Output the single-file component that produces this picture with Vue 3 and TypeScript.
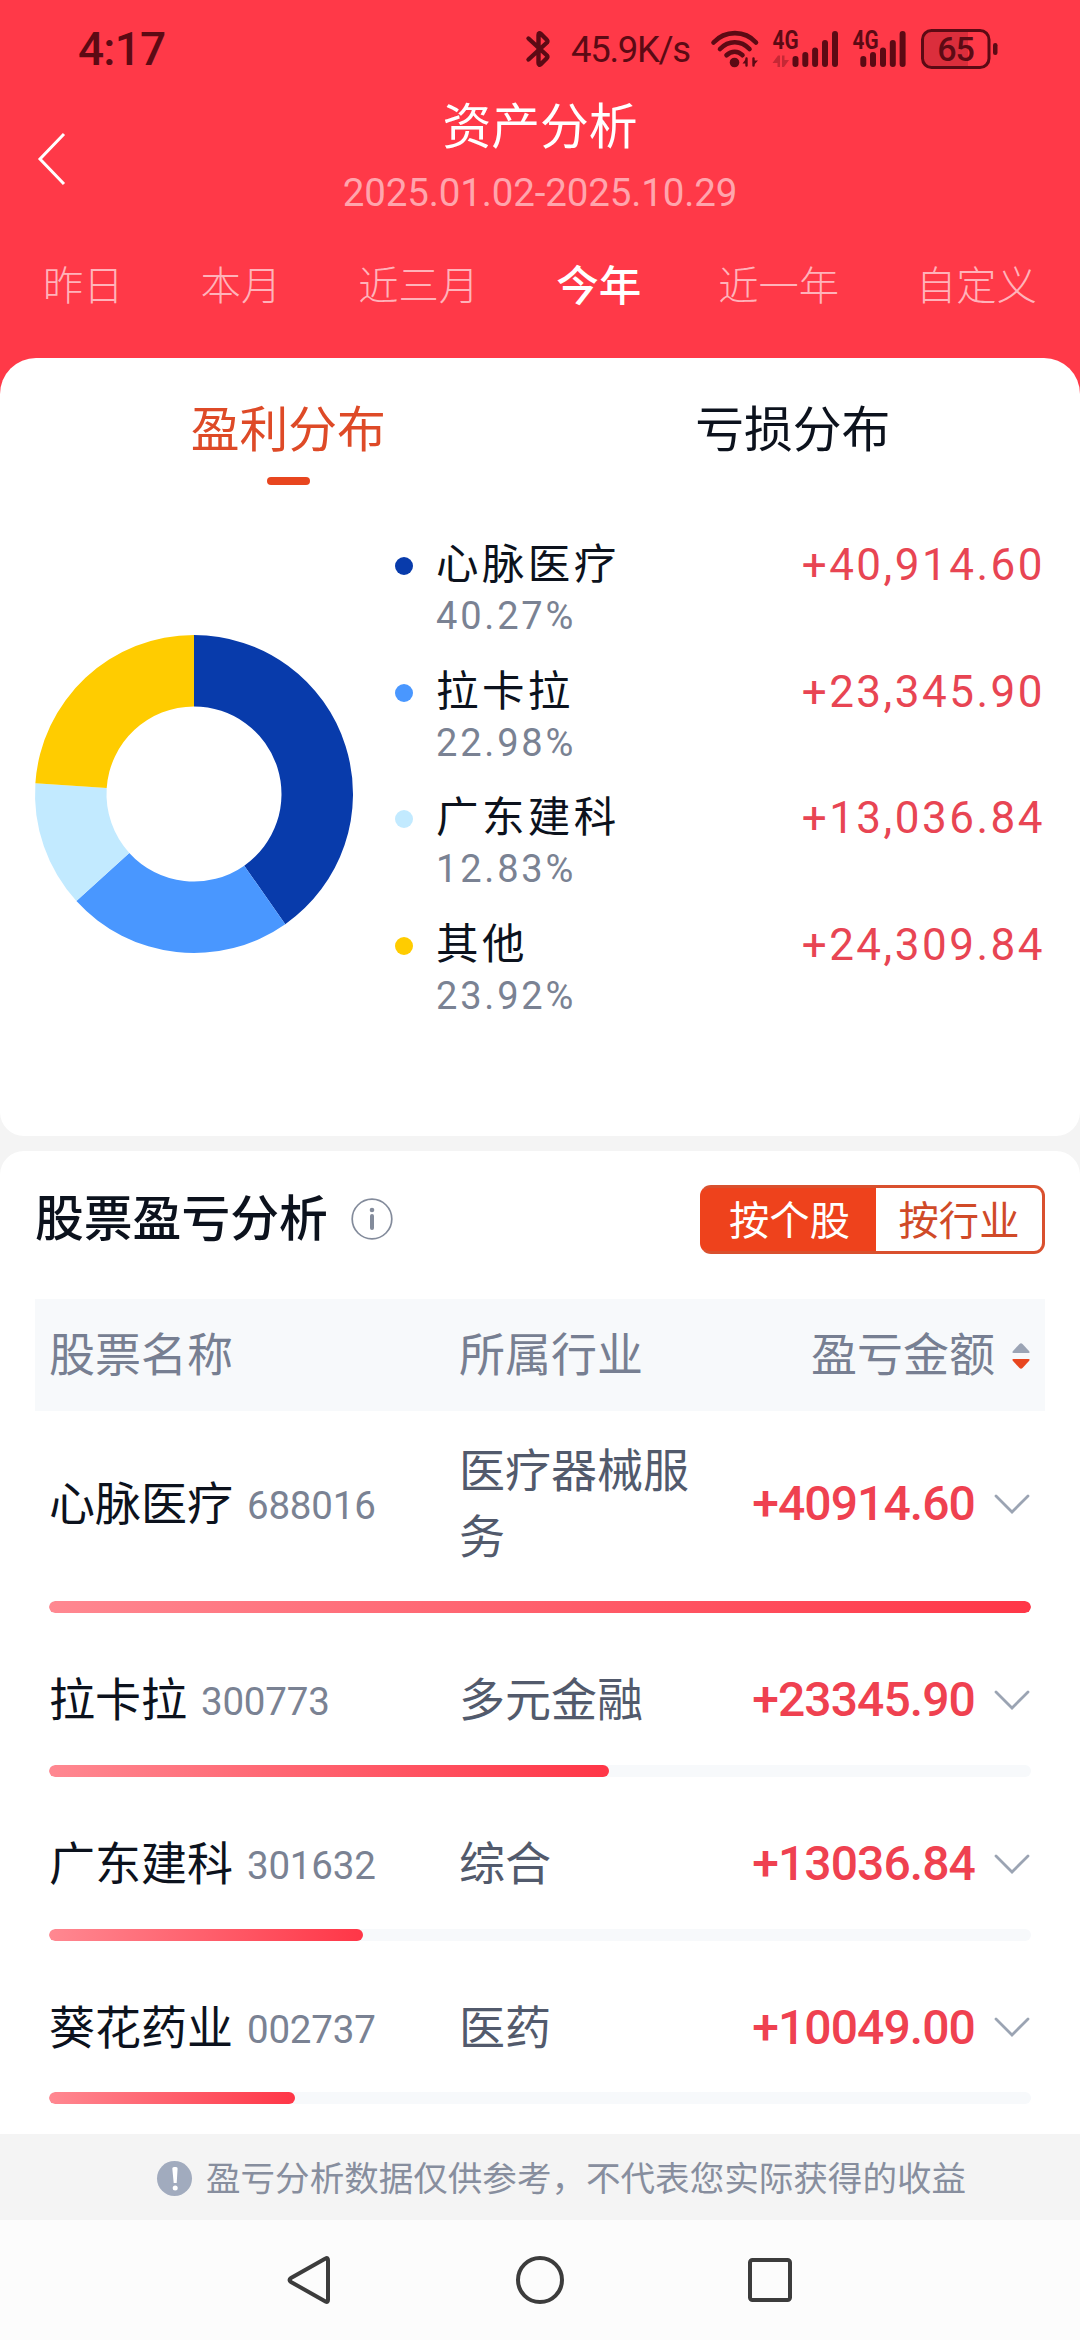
<script setup lang="ts">
import { computed, ref } from 'vue'

interface Slice {
  name: string
  percent: number
  amount: string
  color: string
}

interface Stock {
  name: string
  code: string
  industry: string
  profit: number
}

const ranges = ['昨日', '本月', '近三月', '今年', '近一年', '自定义']
const activeRange = ref('今年')

const slices: Slice[] = [
  { name: '心脉医疗', percent: 40.27, amount: '+40,914.60', color: '#083bab' },
  { name: '拉卡拉', percent: 22.98, amount: '+23,345.90', color: '#4997ff' },
  { name: '广东建科', percent: 12.83, amount: '+13,036.84', color: '#c2eaff' },
  { name: '其他', percent: 23.92, amount: '+24,309.84', color: '#ffcc00' },
]

const stocks: Stock[] = [
  { name: '心脉医疗', code: '688016', industry: '医疗器械服务', profit: 40914.6 },
  { name: '拉卡拉', code: '300773', industry: '多元金融', profit: 23345.9 },
  { name: '广东建科', code: '301632', industry: '综合', profit: 13036.84 },
  { name: '葵花药业', code: '002737', industry: '医药', profit: 10049 },
]

const maxProfit = Math.max(...stocks.map((s) => s.profit))
const barWidth = (s: Stock) => `${Math.round((s.profit / maxProfit) * 100)}%`

const OUTER = 159
const INNER = 87.5

function point(radius: number, fraction: number): string {
  const a = fraction * Math.PI * 2
  return `${(OUTER + radius * Math.sin(a)).toFixed(2)} ${(OUTER - radius * Math.cos(a)).toFixed(2)}`
}

const arcs = computed(() => {
  let start = 0
  return slices.map((s) => {
    const end = start + s.percent / 100
    const large = end - start > 0.5 ? 1 : 0
    const d = `M${point(OUTER, start)} A${OUTER} ${OUTER} 0 ${large} 1 ${point(OUTER, end)} L${point(INNER, end)} A${INNER} ${INNER} 0 ${large} 0 ${point(INNER, start)}Z`
    start = end
    return { d, color: s.color }
  })
})
</script>

<template>
  <div class="screen">
    <header class="hero">
      <div class="status">
        <span class="clock">4:17</span>
        <div class="status-right">
          <svg class="bt" width="24" height="38" viewBox="0 0 24 38" fill="none" stroke="#5c0a14" stroke-width="4.4" stroke-linecap="round" stroke-linejoin="round">
            <path d="M2.5 8.500L21 25.500Q22 27 20.500 28.500L15 34Q12.500 36 12.500 33V5Q12.500 2 15 4L20.500 9.500Q22 11 21 12.500L2.500 29.500" />
          </svg>
          <span class="speed">45.9K/s</span>
          <svg class="wifi" width="48" height="38" viewBox="0 0 48 38" fill="none" stroke="#5c0a14" stroke-width="4.600" stroke-linecap="round">
            <path d="M2.500 12.500C14 0 34 0 45 12.500M9 19C17.500 10 30 10 38.500 19M15.500 25.200C20.500 20.500 27 20.500 31.500 25.200" />
            <circle cx="23.500" cy="32.500" r="4.800" fill="#5c0a14" stroke="none" />
            <path d="M35.500 28.500V35.500M42.500 28.500V35.500" stroke-width="2.400" />
            <path d="M36 27.500V33.500H31.500ZM42 36V30.500H47Z" fill="#5c0a14" stroke="none" />
          </svg>
          <svg class="sig" width="68" height="38" viewBox="0 0 68 38" fill="#5c0a14">
            <text x="0.500" y="19" textLength="26" lengthAdjust="spacingAndGlyphs" class="net">4G</text>
            <g opacity="0.35">
              <path d="M6 25.500H8V37H5.500V33H0.500ZM10 25.500H12.500V30H17L12 37H10Z" />
            </g>
            <rect x="20.500" y="26" width="6" height="11" rx="3" />
            <rect x="30.300" y="22" width="6" height="15" rx="3" />
            <rect x="40.100" y="17.500" width="6" height="19.500" rx="3" />
            <rect x="50" y="10" width="6" height="27" rx="3" />
            <rect x="60" y="1" width="6" height="36" rx="3" />
          </svg>
          <svg class="sig" width="56" height="38" viewBox="0 0 56 38" fill="#5c0a14">
            <text x="0.500" y="19" textLength="26" lengthAdjust="spacingAndGlyphs" class="net">4G</text>
            <rect x="8.300" y="26" width="6" height="11" rx="3" />
            <rect x="18" y="22" width="6" height="15" rx="3" />
            <rect x="28" y="17.500" width="6" height="19.500" rx="3" />
            <rect x="37.800" y="10" width="6" height="27" rx="3" />
            <rect x="47.600" y="1" width="6" height="36" rx="3" />
          </svg>
          <svg class="bat" width="80" height="42" viewBox="0 0 80 42">
            <path d="M10 3H48V38H10Q3 38 3 31V10Q3 3 10 3Z" fill="#5c0a14" opacity="0.22" />
            <rect x="2.500" y="2.500" width="66.500" height="37" rx="9" fill="none" stroke="#5c0a14" stroke-width="3" />
            <rect x="73" y="15" width="4.500" height="12" rx="2.200" fill="#5c0a14" />
            <text x="35.500" y="33" text-anchor="middle" class="bat-text">65</text>
          </svg>
        </div>
      </div>
      <div class="titlebar">
        <svg class="back" width="30" height="54" viewBox="0 0 30 54" fill="none" stroke="#fff" stroke-width="3">
          <path d="M27 2L3 27L27 52" />
        </svg>
        <div class="titles">
          <div class="title">资产分析</div>
          <div class="period">2025.01.02-2025.10.29</div>
        </div>
      </div>
      <nav class="ranges">
        <span v-for="r in ranges" :key="r" class="range" :class="{ on: r === activeRange }" @click="activeRange = r">{{ r }}</span>
      </nav>
    </header>

    <section class="card dist">
      <div class="tabs">
        <div class="tab on">盈利分布</div>
        <div class="tab">亏损分布</div>
      </div>
      <div class="dist-body">
        <svg class="donut" width="318" height="318" viewBox="0 0 318 318">
          <path v-for="a in arcs" :key="a.color" :d="a.d" :fill="a.color" />
        </svg>
        <ul class="legend">
          <li v-for="s in slices" :key="s.name" class="item">
            <i class="dot" :style="{ background: s.color }"></i>
            <div class="item-main">
              <div class="item-top">
                <span class="item-name">{{ s.name }}</span>
                <span class="item-amount">{{ s.amount }}</span>
              </div>
              <div class="item-pct">{{ s.percent.toFixed(2) }}%</div>
            </div>
          </li>
        </ul>
      </div>
    </section>

    <section class="card analysis">
      <div class="head">
        <h2 class="head-title">股票盈亏分析</h2>
        <svg class="info" width="42" height="42" viewBox="0 0 42 42">
          <circle cx="21" cy="21" r="19.800" fill="none" stroke="#838b9b" stroke-width="1.700" />
          <circle cx="21" cy="12" r="2.300" fill="#838b9b" />
          <path d="M21 18V30" stroke="#838b9b" stroke-width="4" stroke-linecap="round" />
        </svg>
        <div class="switch">
          <span class="opt on">按个股</span>
          <span class="opt">按行业</span>
        </div>
      </div>
      <div class="thead">
        <span class="c1">股票名称</span>
        <span class="c2">所属行业</span>
        <span class="c3">
          <span>盈亏金额</span>
          <svg class="sort" width="18" height="28" viewBox="0 0 18 28">
            <path d="M1.500 11Q-.5 11 1 9L7.500 2Q9 .5 10.500 2L17 9Q18.500 11 16.500 11Z" fill="#9ba4b5" />
            <path d="M1.500 17Q-.5 17 1 19L7.500 26Q9 27.500 10.500 26L17 19Q18.500 17 16.500 17Z" fill="#e8461f" />
          </svg>
        </span>
      </div>
      <div v-for="s in stocks" :key="s.code" class="row">
        <div class="cells">
          <div class="c1 stock"><span class="name">{{ s.name }}</span><span class="code">{{ s.code }}</span></div>
          <div class="c2">{{ s.industry }}</div>
          <div class="c3">
            <span class="profit">+{{ s.profit.toFixed(2) }}</span>
            <svg class="chev" width="36" height="22" viewBox="0 0 36 22" fill="none" stroke="#9ba4b3" stroke-width="2.800" stroke-linecap="round">
              <path d="M2 3L18 19L34 3" />
            </svg>
          </div>
        </div>
        <div class="track"><div class="fill" :style="{ width: barWidth(s) }"></div></div>
      </div>
    </section>

    <footer class="notice">
      <svg width="35" height="35" viewBox="0 0 35 35">
        <circle cx="17.500" cy="17.500" r="17.500" fill="#a1abbe" />
        <path d="M15.300 7.500Q15.300 6 17 6H19Q20.700 6 20.600 7.500L19.700 22H16.700Z" fill="#fff" />
        <circle cx="18.200" cy="27" r="2.500" fill="#fff" />
      </svg>
      <span>盈亏分析数据仅供参考，不代表您实际获得的收益</span>
    </footer>

    <div class="sysnav">
      <svg width="48" height="52" viewBox="0 0 48 52"><path d="M40.500 4.500Q43 3 43 6V46Q43 49 40.500 47.500L6 28Q3 26 6 24Z" /></svg>
      <svg width="52" height="52" viewBox="0 0 52 52"><circle cx="26" cy="26" r="22" /></svg>
      <svg width="48" height="52" viewBox="0 0 48 52"><rect x="4" y="6" width="40" height="40" rx="2.500" /></svg>
    </div>
  </div>
</template>

<style>
body {
  background: #f4f4f4;
}
</style>

<style scoped>
.screen {
  width: 1080px;
  height: 2340px;
  overflow: hidden;
  display: flex;
  flex-direction: column;
  background: linear-gradient(#ff3948 0 420px, #f4f4f4 420px);
  font-family: Roboto, "Noto Sans CJK SC", sans-serif;
  color: #0c121d;
}
svg {
  display: block;
  flex: none;
  overflow: visible;
}
.hero {
  height: 358px;
  flex: none;
  display: flex;
  flex-direction: column;
}
.status {
  height: 98px;
  padding: 0 80px 0 78px;
  display: flex;
  justify-content: space-between;
  align-items: center;
  color: #5c0a14;
}
.clock {
  font-size: 46px;
  font-weight: 500;
  letter-spacing: -0.8px;
}
.status-right {
  display: flex;
  align-items: center;
}
.speed {
  margin: 0 20px 0 21px;
  width: 120px;
  font-size: 36.5px;
  letter-spacing: -1.3px;
  white-space: nowrap;
}
.wifi {
  margin-right: 13px;
}
.sig {
  margin-right: 12px;
}
.net {
  font-size: 25px;
  font-weight: 700;
}
.bat-text {
  font-size: 34px;
  font-weight: 500;
  letter-spacing: -1px;
  fill: #5c0a14;
}
.titlebar {
  height: 122px;
  display: grid;
  grid-template-columns: 100px 1fr 100px;
}
.back {
  margin: 34px 0 0 37px;
}
.titles {
  text-align: center;
}
.title {
  height: 58px;
  line-height: 59px;
  font-size: 48.8px;
  color: #fff;
}
.period {
  margin-top: 9px;
  line-height: 56px;
  font-size: 38.5px;
  letter-spacing: -0.15px;
  color: #ffa5ad;
}
.ranges {
  margin-top: 37px;
  padding: 0 43px;
  height: 60px;
  display: flex;
  justify-content: space-between;
  align-items: center;
}
.range {
  font-size: 40.3px;
  font-weight: 300;
  line-height: 62px;
  color: #ffb3ba;
}
.range.on {
  font-size: 42.5px;
  font-weight: 500;
  line-height: 58px;
  color: #fff;
}
.card {
  background: #fff;
  padding: 0 35px;
}
.dist {
  height: 778px;
  box-sizing: border-box;
  flex: none;
  border-radius: 36px 36px 24px 24px;
}
.tabs {
  display: flex;
  padding: 42px 0 0 1px;
}
.tab {
  flex: 1;
  display: flex;
  flex-direction: column;
  align-items: center;
  line-height: 62px;
  font-size: 48.8px;
}
.tab.on {
  color: #de4a27;
}
.tab.on::after {
  content: "";
  width: 43px;
  height: 8px;
  margin-top: 15px;
  border-radius: 4px;
  background: #e8461f;
}
.dist-body {
  display: flex;
  margin-top: 47px;
}
.donut {
  margin-top: 103px;
}
.legend {
  flex: 1;
  list-style: none;
  margin: 0 0 0 42px;
  padding: 0;
}
.item {
  display: flex;
  height: 126.700px;
}
.dot {
  width: 18px;
  height: 18px;
  margin: 25px 23px 0 0;
  border-radius: 50%;
}
.item-main {
  flex: 1;
}
.item-top {
  display: flex;
  justify-content: space-between;
  line-height: 66px;
}
.item-name {
  font-size: 42.500px;
  letter-spacing: 3.400px;
}
.item-amount {
  font-size: 44px;
  letter-spacing: 2.500px;
  color: #e84553;
}
.item-pct {
  margin-top: -4px;
  line-height: 44px;
  font-size: 38px;
  letter-spacing: 2.800px;
  color: #7a8293;
}
.analysis {
  margin-top: 15px;
  flex: 1;
  min-height: 0;
  border-radius: 24px 24px 0 0;
}
.head {
  height: 148px;
  box-sizing: border-box;
  padding-top: 34px;
  display: flex;
  align-items: flex-start;
}
.head-title {
  margin: 0;
  font-size: 48.800px;
  font-weight: 500;
  line-height: 69px;
}
.info {
  margin: 13px 0 0 23px;
}
.switch {
  margin-left: auto;
  width: 345px;
  height: 69px;
  box-sizing: border-box;
  border: 3px solid #d9502e;
  border-left-color: #ee421c;
  border-radius: 11px;
  display: flex;
  overflow: hidden;
  background: #ee421c;
}
.opt {
  flex: 1;
  text-align: center;
  line-height: 67px;
  font-size: 40.300px;
  background: #fff;
  color: #d04a28;
}
.opt.on {
  flex: 0 0 173px;
  background: #ee421c;
  color: #fff;
}
.thead {
  height: 112px;
  padding: 0 14px;
  display: flex;
  align-items: center;
  background: #f7f9fb;
  font-size: 46px;
  line-height: 62px;
  color: #777f92;
}
.c1 {
  width: 410px;
  flex: none;
}
.c2 {
  width: 250px;
  flex: none;
}
.c3 {
  flex: 1;
  display: flex;
  justify-content: flex-end;
  align-items: center;
}
.sort {
  margin: 1px 1px 0 17px;
}
.row {
  padding: 27px 14px;
}
.cells {
  display: flex;
  align-items: center;
  font-size: 46px;
  line-height: 65.500px;
}
.stock {
  display: flex;
  align-items: baseline;
  height: 65.500px;
}
.name {
  position: relative;
  top: 1px;
}
.code {
  margin-left: 14px;
  font-size: 38.500px;
  letter-spacing: -0.200px;
  color: #7a8293;
}
.cells .c2 {
  padding-top: 1px;
  margin-bottom: -1px;
  color: #525a6c;
}
.profit {
  font-size: 48px;
  font-weight: 500;
  letter-spacing: -0.900px;
  color: #ef4150;
}
.chev {
  margin: 0 1px 0 19px;
}
.track {
  height: 12px;
  margin-top: 32.200px;
  border-radius: 6px;
  background: #f7f9fb;
  overflow: hidden;
}
.fill {
  height: 12px;
  border-radius: 6px;
  background: linear-gradient(90deg, #ff8891, #ff3647);
}
.notice {
  height: 86px;
  flex: none;
  display: flex;
  align-items: center;
  padding: 3px 0 0 157px;
  box-sizing: border-box;
  background: #f4f4f4;
  font-size: 34.550px;
  line-height: 44px;
  color: #878e9e;
}
.notice span {
  margin-left: 14px;
  white-space: nowrap;
}
.sysnav {
  height: 120px;
  flex: none;
  padding: 0 286px 0 285px;
  display: flex;
  justify-content: space-between;
  align-items: center;
  background: #fcfcfc;
}
.sysnav svg {
  fill: none;
  stroke: #3c3c3c;
  stroke-width: 4;
}
</style>
